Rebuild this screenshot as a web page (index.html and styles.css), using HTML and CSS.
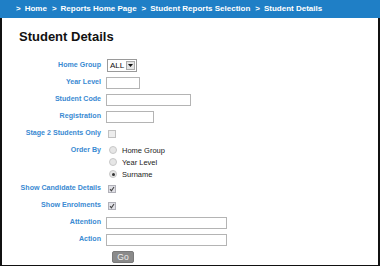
FILE: index.html
```html
<!DOCTYPE html>
<html>
<head>
<meta charset="utf-8">
<link rel="stylesheet" href="styles.css">
</head>
<body>
<div class="page">
  <div class="crumbs">
    <span class="sep">&gt;</span><span>Home</span>
    <span class="sep">&gt;</span><span>Reports Home Page</span>
    <span class="sep">&gt;</span><span>Student Reports Selection</span>
    <span class="sep">&gt;</span><span>Student Details</span>
  </div>
  <div class="content">
    <h1 class="title">Student Details</h1>
    <div class="form">
      <div class="lbl">Home Group</div>
      <div class="fld"><span class="select"><span class="sel-text">ALL</span><span class="sel-btn"><svg width="5" height="3" viewBox="0 0 5 3"><path d="M0 0H5L2.5 3Z" fill="#111"/></svg></span></span></div>

      <div class="lbl">Year Level</div>
      <div class="fld"><input class="txt w-year" type="text"></div>

      <div class="lbl">Student Code</div>
      <div class="fld"><input class="txt w-code" type="text"></div>

      <div class="lbl">Registration</div>
      <div class="fld"><input class="txt w-reg" type="text"></div>

      <div class="lbl">Stage 2 Students Only</div>
      <div class="fld"><span class="cb"></span></div>

      <div class="lbl lbl-top">Order By</div>
      <div class="fld radios">
        <div class="ropt"><span class="radio"></span><span>Home Group</span></div>
        <div class="ropt"><span class="radio"></span><span>Year Level</span></div>
        <div class="ropt"><span class="radio on"></span><span>Surname</span></div>
      </div>

      <div class="lbl">Show Candidate Details</div>
      <div class="fld"><span class="cb checked"><svg width="6" height="6" viewBox="0 0 6 6"><path d="M1 3.2L2.4 4.8L5 1" fill="none" stroke="#444" stroke-width="1.1"/></svg></span></div>

      <div class="lbl">Show Enrolments</div>
      <div class="fld"><span class="cb checked"><svg width="6" height="6" viewBox="0 0 6 6"><path d="M1 3.2L2.4 4.8L5 1" fill="none" stroke="#444" stroke-width="1.1"/></svg></span></div>

      <div class="lbl">Attention</div>
      <div class="fld"><input class="txt w-long" type="text"></div>

      <div class="lbl">Action</div>
      <div class="fld"><input class="txt w-long" type="text"></div>

      <div class="lbl"></div>
      <div class="fld"><button class="go" type="button">Go</button></div>
    </div>
  </div>
</div>
</body>
</html>
```

FILE: styles.css
```css
* { box-sizing: border-box; }
html, body { margin: 0; padding: 0; background: #fff; }
body { font-family: "Liberation Sans", Arial, sans-serif; }

.page { width: 380px; height: 266px; display: flex; flex-direction: column; }

.crumbs {
  height: 18px;
  background: #1f7fc6;
  color: #fff;
  font-weight: bold;
  font-size: 8px;
  line-height: 18px;
  padding-left: 16px;
  white-space: nowrap;
  display: flex;
}
.crumbs .sep { margin: 0 4px 0 5px; }
.crumbs .sep:first-child { margin-left: 0; }

.content {
  flex: 1;
  border-left: 2px solid #111;
  border-right: 2px solid #111;
  border-bottom: 2px solid #111;
  padding: 11px 0 0 0;
}

.title {
  margin: 0 0 0 17px;
  font-size: 13px;
  line-height: 15px;
  font-weight: bold;
  color: #111;
}

.form {
  margin-top: 13px;
  display: grid;
  grid-template-columns: 99px 1fr;
  column-gap: 5px;
  grid-auto-rows: minmax(17px, auto);
  align-items: center;
}

.lbl {
  text-align: right;
  font-weight: bold;
  font-size: 7.1px;
  color: #3a8ad2;
  line-height: 17px;
  white-space: nowrap;
}
.lbl-top { align-self: start; }

.fld { display: flex; align-items: center; height: 100%; }

.txt {
  height: 12px;
  border: 1px solid #b4b4b4;
  background: #fff;
  padding: 0;
  margin: 0;
}
.w-year { width: 34px; }
.w-code { width: 85px; }
.w-reg { width: 48px; }
.w-long { width: 121px; }

.select {
  margin-left: 1px;
  width: 30px;
  height: 13px;
  border: 1px solid #9a9a9a;
  display: flex;
  align-items: center;
  background: #fff;
}
.sel-text { flex: 1; font-size: 8px; padding-left: 2px; color: #111; }
.sel-btn {
  width: 9px; height: 9px; margin-right: 1px;
  background: #e4e4e4; border: 1px solid #aaa;
  display: flex; align-items: center; justify-content: center;
}

.cb {
  margin-left: 2px;
  width: 8px; height: 8px;
  border: 1px solid #c0c0c0;
  background: #ededed;
  display: flex; align-items: center; justify-content: center;
}
.cb.checked { background: #e0e0e6; border-color: #b0b0b8; }

.radios { flex-direction: column; align-items: flex-start; padding-top: 2px; height: 38px; justify-content: flex-start; }
.ropt { height: 12px; display: flex; align-items: center; font-size: 7.5px; color: #222; }
.radio {
  margin-left: 3px; margin-right: 5px;
  width: 8px; height: 8px; border-radius: 50%;
  border: 1px solid #c8c8c8;
  background: #e6e6e6;
  display: inline-block;
  position: relative;
}
.radio.on::after {
  content: ""; position: absolute; left: 1.5px; top: 1.5px;
  width: 3px; height: 3px; border-radius: 50%; background: #333;
}

.go {
  margin-left: 6px;
  width: 22px; height: 12px;
  background: #8a8a8a;
  border: 1px solid #7a7a7a;
  border-radius: 2px;
  color: #eee;
  font-family: "Liberation Sans", Arial, sans-serif;
  font-size: 8.5px;
  padding: 0;
  line-height: 10px;
}
```
